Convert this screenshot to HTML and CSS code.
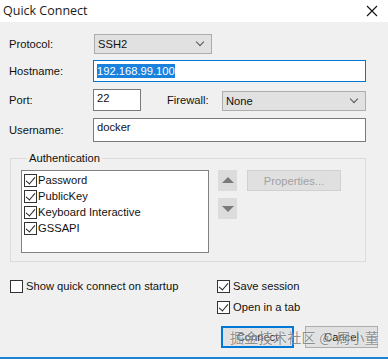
FILE: index.html
```html
<!DOCTYPE html>
<html lang="en">
<head>
  <meta charset="UTF-8" />
  <title>Quick Connect</title>
  <link rel="stylesheet" href="styles.css">
</head>
<body>
  <div class="window">
    <div class="titlebar">
      <span class="title">Quick Connect</span>
      <svg class="close" width="12" height="12" viewBox="0 0 12 12">
        <path d="M1 1 L11 11 M11 1 L1 11" stroke="#111" stroke-width="1.1" fill="none"/>
      </svg>
    </div>

    <div class="content">
      <div class="row r1">
        <label class="lbl">Protocol:</label>
        <div class="select protocol"><span>SSH2</span><span class="chev"></span></div>
      </div>
      <div class="row r2">
        <label class="lbl">Hostname:</label>
        <div class="input wide focus"><span class="selected">192.168.99.100</span></div>
      </div>
      <div class="row r3">
        <label class="lbl">Port:</label>
        <div class="input port">22</div>
        <label class="lbl fw">Firewall:</label>
        <div class="select firewall"><span>None</span><span class="chev"></span></div>
      </div>
      <div class="row r4">
        <label class="lbl">Username:</label>
        <div class="input wide user">docker</div>
      </div>

      <fieldset class="auth">
        <legend>Authentication</legend>
        <div class="auth-body">
          <div class="listbox">
            <div class="item"><span class="check on"></span>Password</div>
            <div class="item"><span class="check on"></span>PublicKey</div>
            <div class="item"><span class="check on"></span>Keyboard Interactive</div>
            <div class="item"><span class="check on"></span>GSSAPI</div>
          </div>
          <div class="arrows">
            <div class="arrow up"></div>
            <div class="arrow down"></div>
          </div>
          <div class="btn disabled props">Properties...</div>
        </div>
      </fieldset>

      <div class="options">
        <div class="opt-col left">
          <div class="opt"><span class="check"></span>Show quick connect on startup</div>
        </div>
        <div class="opt-col right">
          <div class="opt"><span class="check on"></span>Save session</div>
          <div class="opt"><span class="check on"></span>Open in a tab</div>
        </div>
      </div>

      <div class="buttons">
        <div class="btn default">Connect</div>
        <div class="btn">Cancel</div>
      </div>
    </div>

    <div class="watermark">掘金技术社区 @ 周小董</div>
  </div>
</body>
</html>
```

FILE: styles.css
```css
html, body {
  margin: 0;
  padding: 0;
}
body {
  font-family: "Liberation Sans", Arial, sans-serif;
  font-size: 11.2px;
  color: #111;
  background: #f0f0f0;
}
.window {
  position: relative;
  width: 388px;
  height: 357px;
  background: #f0f0f0;
  border-bottom: 2px solid #1883d7;
  overflow: hidden;
}
.titlebar {
  height: 22px;
  background: #fff;
  display: flex;
  align-items: center;
  justify-content: space-between;
  padding: 0 10px 0 3px;
}
.title {
  font-family: "Open Sans", "Liberation Sans", sans-serif;
  font-size: 12.5px;
  margin-top: -2px;
  color: #1a1a1a;
}
.close {
  margin-top: -1px;
}

.content {
  padding-top: 12px;
}
.row {
  display: flex;
  align-items: center;
  padding-left: 9px;
}
.lbl {
  width: 84px;
  flex: none;
}
.r2 { margin-top: 6px; }
.r3 { margin-top: 7px; }
.r4 { margin-top: 7px; }

.select {
  box-sizing: border-box;
  height: 20px;
  background: #e1e1e1;
  border: 1px solid #adadad;
  display: flex;
  align-items: center;
  justify-content: space-between;
  padding: 0 8px 0 3px;
}
.protocol {
  width: 118px;
  margin-left: 1px;
}
.firewall {
  width: 144px;
  margin-top: 2px;
}
.chev {
  width: 5px;
  height: 5px;
  border-right: 1px solid #555;
  border-bottom: 1px solid #555;
  transform: rotate(45deg);
  margin-top: -4px;
}

.input {
  box-sizing: border-box;
  height: 22px;
  background: #fff;
  border: 1px solid #7a7a7a;
  padding: 0 3px;
  line-height: 18px;
}
.wide { width: 273px; }
.user {
  height: 24px;
  line-height: 16px;
}
.port {
  width: 48px;
  line-height: 16px;
}
.focus {
  border-color: #0078d7;
  padding-top: 1px;
}
.selected {
  background: #1a82dc;
  color: #fff;
  padding: 1px 0;
}
.fw {
  width: 55px;
  margin-left: 26px;
}

.auth {
  box-sizing: border-box;
  width: 356px;
  margin: 9px 0 0 10px;
  padding: 5px 10px 8px 10px;
  border: 1px solid #dcdcdc;
  min-width: 0;
}
.auth legend {
  padding: 0 2px;
  margin-left: 6px;
  line-height: 14px;
}
.auth-body {
  display: flex;
  align-items: flex-start;
}
.listbox {
  box-sizing: border-box;
  width: 188px;
  height: 83px;
  background: #fff;
  border: 1px solid #828282;
  padding: 1px 2px;
}
.item {
  display: flex;
  align-items: center;
  height: 16px;
}
.check {
  box-sizing: border-box;
  width: 13px;
  height: 13px;
  border: 1px solid #333;
  background: #fff;
  margin-right: 1px;
  flex: none;
  position: relative;
}
.check.on::after {
  content: "";
  position: absolute;
  left: 3px;
  top: 0px;
  width: 4px;
  height: 8px;
  border-right: 1px solid #222;
  border-bottom: 1px solid #222;
  transform: rotate(40deg);
}

.arrows {
  display: flex;
  flex-direction: column;
  gap: 7px;
  margin-left: 9px;
}
.arrow {
  width: 19px;
  height: 21px;
  background: #dcdcdc;
  position: relative;
}
.arrow::after {
  content: "";
  position: absolute;
  left: 4px;
  width: 0;
  height: 0;
  border-left: 6px solid transparent;
  border-right: 6px solid transparent;
}
.arrow.up::after {
  top: 7px;
  border-bottom: 6px solid #7a7a7a;
}
.arrow.down::after {
  top: 8px;
  border-top: 6px solid #7a7a7a;
}

.btn {
  box-sizing: border-box;
  height: 22px;
  width: 73px;
  background: #e1e1e1;
  border: 1px solid #adadad;
  display: flex;
  align-items: center;
  justify-content: center;
}
.btn.disabled {
  color: #a0a0a0;
  background: #e0e0e0;
  border-color: #d0d0d0;
}
.props {
  width: 94px;
  height: 21px;
  margin-left: 10px;
}
.btn.default {
  border: 2px solid #0078d7;
}

.options {
  display: flex;
  margin-top: 16px;
}
.opt-col {
  display: flex;
  flex-direction: column;
  gap: 5px;
}
.left {
  padding-left: 10px;
  width: 207px;
}
.opt {
  display: flex;
  align-items: center;
  height: 16px;
}
.opt .check {
  margin-right: 3px;
}

.buttons {
  display: flex;
  justify-content: flex-end;
  gap: 11px;
  padding-right: 10px;
  margin-top: 11px;
}

.watermark {
  position: absolute;
  left: 230px;
  top: 327px;
  font-family: "Noto Sans CJK SC", sans-serif;
  font-size: 14px;
  color: rgba(110, 110, 110, 0.75);
  text-shadow: 0 0 2px rgba(255, 255, 255, 0.9);
  letter-spacing: 0.3px;
  white-space: nowrap;
}
```
